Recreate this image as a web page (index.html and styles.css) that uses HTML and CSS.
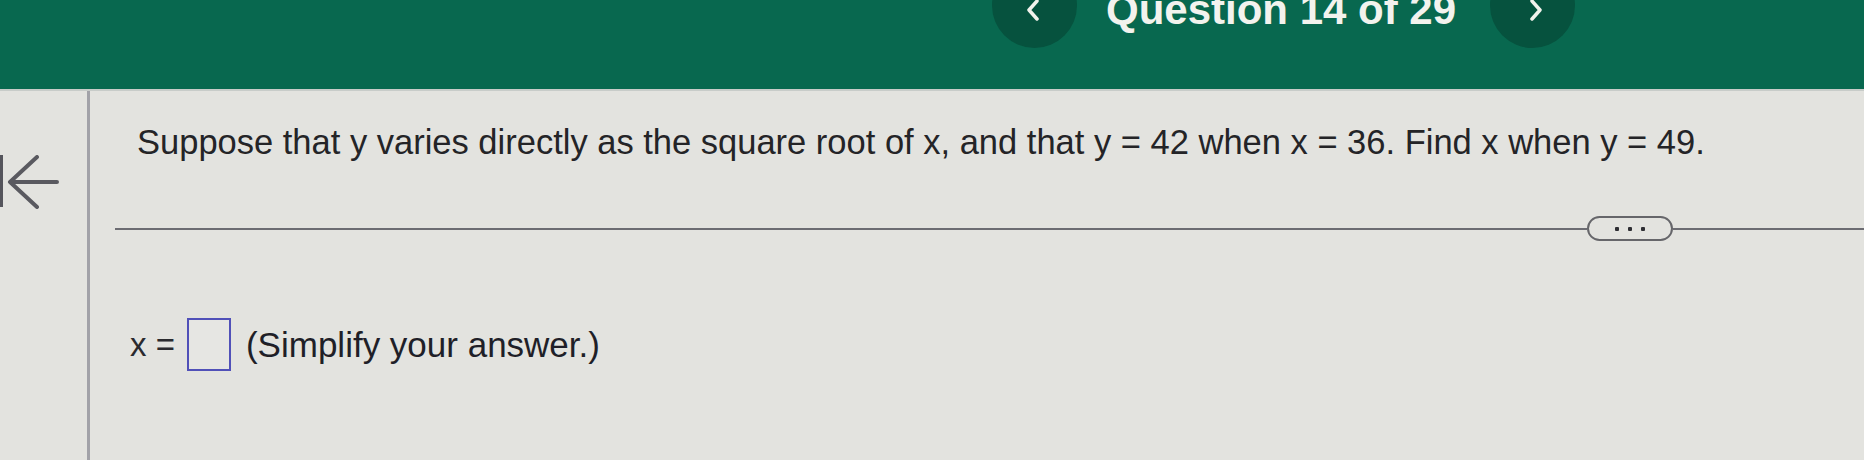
FILE: index.html
```html
<!DOCTYPE html>
<html>
<head>
<meta charset="utf-8">
<link rel="stylesheet" href="styles.css">
</head>
<body>
<header class="topbar">
  <nav class="qnav">
    <button class="navbtn prev" aria-label="Previous question">
      <svg width="16" height="22" viewBox="0 0 16 22"><path d="M12 2 L4 11 L12 20" fill="none" stroke="#f2f2ec" stroke-width="3.5" stroke-linecap="round" stroke-linejoin="round"/></svg>
    </button>
    <h1 class="qtitle">Question 14 of 29</h1>
    <button class="navbtn next" aria-label="Next question">
      <svg width="16" height="22" viewBox="0 0 16 22"><path d="M4 2 L12 11 L4 20" fill="none" stroke="#f2f2ec" stroke-width="3.5" stroke-linecap="round" stroke-linejoin="round"/></svg>
    </button>
  </nav>
</header>
<div class="main">
  <aside class="sidebar">
    <svg class="backicon" width="60" height="54" viewBox="0 0 60 54">
      <rect x="0" y="0" width="3" height="52" fill="#55555c"/>
      <path d="M37 2 L10 27 L37 52 M10 27 L57 27" fill="none" stroke="#5a5a60" stroke-width="4" stroke-linecap="round" stroke-linejoin="round"/>
    </svg>
  </aside>
  <section class="content">
    <p class="question">Suppose that y varies directly as the square root of x, and that y = 42 when x = 36. Find x when y = 49.</p>
    <div class="divider">
      <span class="rule"></span>
      <button class="more" aria-label="More"><i></i><i></i><i></i></button>
      <span class="rule tail"></span>
    </div>
    <div class="answer">
      <span class="lhs">x =</span>
      <span class="box"></span>
      <span class="hint">(Simplify your answer.)</span>
    </div>
  </section>
</div>
</body>
</html>
```
FILE: styles.css
```css
* { box-sizing: border-box; }
html, body {
  margin: 0;
  padding: 0;
}
body {
  width: 1864px;
  height: 460px;
  overflow: hidden;
  background: #e3e3df;
  font-family: "Liberation Sans", Arial, sans-serif;
  color: #232326;
}
.topbar {
  height: 91px;
  background: #08684f;
  border-bottom: 2px solid #c8ccc9;
  overflow: hidden;
}
.qnav {
  display: flex;
  align-items: flex-start;
  padding-left: 992px;
}
.navbtn {
  width: 85px;
  height: 85px;
  margin-top: -37px;
  border: none;
  border-radius: 50%;
  background: #06523e;
  display: flex;
  justify-content: center;
  align-items: flex-end;
  padding: 0 0 27px 0;
  flex: none;
}
.navbtn.prev svg { margin-left: -4px; }
.navbtn.next svg { margin-left: 6px; }
.qtitle {
  margin: -14px 0 0 29px;
  font-size: 42px;
  line-height: 48px;
  font-weight: bold;
  color: #f3f3ee;
  width: 384px;
  white-space: nowrap;
  flex: none;
}
.main {
  display: flex;
  height: 370px;
}
.sidebar {
  width: 90px;
  border-right: 3px solid #a2a2a8;
  padding-top: 64px;
  flex: none;
}
.backicon { display: block; }
.content {
  flex: 1;
  padding-left: 47px;
}
.question {
  margin: 31px 0 0 0;
  font-size: 34.5px;
  line-height: 40px;
  color: #242427;
  white-space: nowrap;
}
.divider {
  display: flex;
  align-items: center;
  margin: 54px 0 0 -22px;
}
.rule {
  flex: 1;
  height: 2px;
  background: #6c6c72;
}
.rule.tail { flex: none; width: 191px; }
.more {
  width: 86px;
  height: 25px;
  border: 2px solid #66666a;
  border-radius: 13px;
  background: #e3e3df;
  display: flex;
  justify-content: center;
  align-items: center;
  gap: 9px;
  padding: 0;
  flex: none;
}
.more i {
  width: 4px;
  height: 4px;
  background: #2e2e33;
  border-radius: 1px;
}
.answer {
  display: flex;
  align-items: center;
  margin: 77px 0 0 -7px;
}
.lhs {
  font-size: 33px;
  color: #2a2a2e;
}
.box {
  width: 44px;
  height: 53px;
  border: 2px solid #5050b8;
  margin-left: 12px;
  background: #e6e6e3;
  flex: none;
}
.hint {
  margin-left: 15px;
  font-size: 35px;
  color: #1f1f28;
}
```
